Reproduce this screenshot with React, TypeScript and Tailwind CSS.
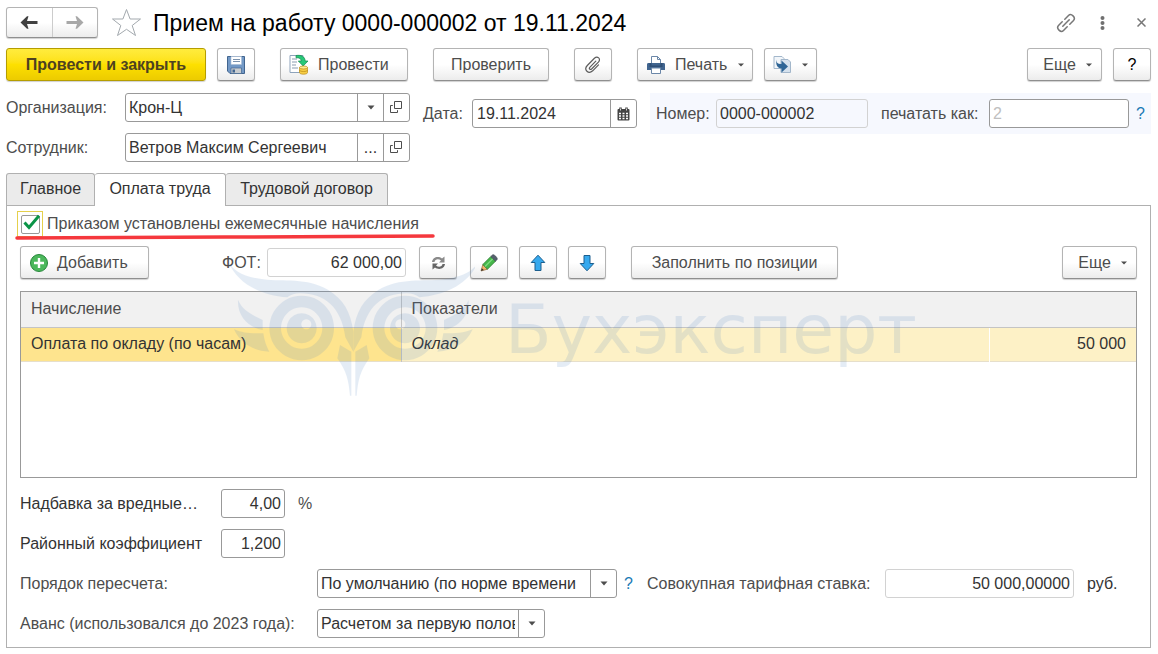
import { ReactNode, useState } from 'react'
import clsx from 'clsx'

const btn =
  'flex h-[33px] shrink-0 items-center rounded-[3px] border border-[#b4b4b4] border-b-[#8f8f8f] bg-linear-to-b from-white from-50% to-[#ececec] text-[#4d4d4d] shadow-[0_1px_1px_#d0d0d0]'
const field =
  'h-[29px] rounded-[3px] border border-[#999999] bg-white px-[3px] text-[#333333] outline-none'
const readonlyField =
  'h-[29px] rounded-[3px] border border-[#d2d2d2] px-[3px] text-[#333333] outline-none'

function Button({
  className,
  label,
  start,
  children,
}: {
  className?: string
  label?: string
  start?: boolean
  children: ReactNode
}) {
  return (
    <button
      type="button"
      aria-label={label}
      className={clsx(btn, start ? 'justify-start px-2' : 'justify-center', className)}
    >
      {children}
    </button>
  )
}

function Caret() {
  return (
    <svg width="8" height="5" viewBox="0 0 8 5" aria-hidden="true">
      <path d="M0.5 0.5h7L4 4.5z" fill="#4d4d4d" />
    </svg>
  )
}

function SmallCaret() {
  return (
    <svg width="6" height="4" viewBox="0 0 6 4" aria-hidden="true">
      <path d="M0 0.5h6L3 3.5z" fill="#4d4d4d" />
    </svg>
  )
}

function OpenIcon() {
  return (
    <svg width="13" height="13" viewBox="0 0 13 13" fill="none" stroke="#4d4d4d" aria-hidden="true">
      <path d="M4.5 0.5h7v7h-7z" />
      <path d="M2.8 4.5H0.5v7h7V9.2" />
    </svg>
  )
}

function FieldButton({ label, children }: { label: string; children: ReactNode }) {
  return (
    <button
      type="button"
      aria-label={label}
      className="flex w-[26px] shrink-0 items-center justify-center border-l border-[#999999] text-[#333333]"
    >
      {children}
    </button>
  )
}

function Combo({ id, value, className, open }: { id: string; value: string; className: string; open?: boolean }) {
  return (
    <div className={clsx('flex h-[29px] overflow-hidden rounded-[3px] border border-[#999999]', className)}>
      <select id={id} className="min-w-0 flex-1 appearance-none pl-[3px] pr-[3px] text-[#333333] outline-none">
        <option>{value}</option>
      </select>
      <FieldButton label="Выбрать">
        <Caret />
      </FieldButton>
      {open && (
        <FieldButton label="Открыть">
          <OpenIcon />
        </FieldButton>
      )}
    </div>
  )
}

function Arrow({ color, flip }: { color: string; flip?: boolean }) {
  return (
    <svg width="18" height="13" viewBox="0 0 18 13" className={flip ? 'rotate-180' : ''} aria-hidden="true">
      <path d="M0.5 6.5L7 0.2h1.500L7 5h10.500v3H7l1.500 4.800H7z" fill={color} />
    </svg>
  )
}

function SaveIcon() {
  return (
    <svg width="20" height="20" viewBox="0 0 20 20" aria-hidden="true">
      <path d="M1.5 1.5h17v17H4L1.5 16z" fill="#7399c6" stroke="#42658f" />
      <path d="M5 1.5h10.500v8H5z" fill="#fff" stroke="#a9bdd5" strokeWidth="0.6" />
      <path d="M7 4.500h7M7 6.500h7" stroke="#7b92ad" />
      <path d="M5 13h10.500v5.500H5z" fill="#c9cdd0" stroke="#42658f" strokeWidth="0.7" />
      <path d="M6.500 14.500h2.500v3H6.500z" fill="#42658f" />
    </svg>
  )
}

function PostIcon() {
  return (
    <svg width="20" height="21" viewBox="0 0 20 21" aria-hidden="true">
      <path d="M1 1.500h13v17H1z" fill="#fff" stroke="#8ea3bb" />
      <path d="M3 5h5M3 8h5M3 11h4M3 14h6M10 4h2" stroke="#8a9bb0" />
      <path d="M7 1.500c5-.8 9 1 9.200 5.500H19l-4.800 5-4.900-5h3C12 4.500 10 3.500 7 3.800z" fill="#28c878" stroke="#12894c" strokeWidth="0.7" />
      <path d="M10.500 13.500v5c0 2.300 8 2.300 8 0v-5z" fill="#f7ce46" stroke="#b98a14" strokeWidth="0.7" />
      <ellipse cx="14.500" cy="13.500" rx="4" ry="1.500" fill="#ffe98d" stroke="#b98a14" strokeWidth="0.7" />
      <path d="M10.500 16c0 2 8 2 8 0" fill="none" stroke="#b98a14" strokeWidth="0.7" />
    </svg>
  )
}

function ClipIcon() {
  return (
    <svg width="18" height="18" viewBox="0 0 18 18" fill="none" stroke="#5c5c5c" strokeWidth="1.200" strokeLinecap="round" aria-hidden="true">
      <path d="M11.800 5.200L5.800 11.300c-1.200 1.400.4 2.900 1.800 1.700l6.800-6.900c3-3.300-1-6.600-4-3.800L3.300 9.500c-4 4.300 1.200 9.200 5.400 5.300l5.800-5.900" />
    </svg>
  )
}

function PrintIcon() {
  return (
    <svg width="20" height="20" viewBox="0 0 20 20" aria-hidden="true">
      <path d="M5.500 9V1.500h6l3 3V9z" fill="#fff" stroke="#6b87a8" />
      <path d="M11.500 1.500v3h3" fill="none" stroke="#6b87a8" />
      <path d="M1 9.500c0-1 .5-1.500 1.500-1.500h15c1 0 1.500.5 1.500 1.500V15H1z" fill="#41658f" />
      <path d="M3.500 8h2v2.500h9V8h2v4h-13z" fill="#2f4f76" />
      <path d="M5.500 13h9v5.500h-9z" fill="#fff" stroke="#6b87a8" />
    </svg>
  )
}

function CopyIcon() {
  return (
    <svg width="19" height="19" viewBox="0 0 19 19" aria-hidden="true">
      <path d="M1 1.500h8l2 2v10H1z" fill="#f2f6fa" stroke="#a3b7cb" />
      <path d="M8 4.500h7l2.500 2.500v10.500H8z" fill="#d5e1ed" stroke="#a3b7cb" />
      <path d="M3.500 4.500c0 3.500 1 4.500 5 4.500V5.500l6.500 6-6.500 6v-4C4.500 13.500 2.500 10 3.500 4.500z" fill="#2e6596" />
    </svg>
  )
}

function CalendarIcon() {
  return (
    <svg width="13" height="14" viewBox="0 0 13 14" aria-hidden="true">
      <path d="M1.500 2h10a1 1 0 0 1 1 1v9.500a1 1 0 0 1-1 1h-10a1 1 0 0 1-1-1V3a1 1 0 0 1 1-1z" fill="#444" />
      <path d="M3.500 0.500v3M9.500 0.500v3" stroke="#444" strokeWidth="2.500" />
      <path d="M3.500 1.500v2M9.500 1.500v2" stroke="#fff" strokeWidth="0.800" />
      <path d="M2 6.500h2M5.500 6.500h2M9 6.500h2M2 9h2M5.500 9h2M9 9h2M2 11.500h2M5.500 11.500h2M9 11.500h2" stroke="#fff" strokeWidth="1.500" />
    </svg>
  )
}

function RefreshIcon() {
  return (
    <svg width="15" height="14" viewBox="0 0 15 14" aria-hidden="true">
      <path d="M1 6C1.500 1.500 7-.5 11 2.500L13.500.5v6H8l2-2C7.500 2.500 4 3 3.500 6z" fill="#8a8a8a" />
      <path d="M14 8c-.5 4.500-6 6.500-10 3.500L1.500 13.500v-6H7l-2 2c2.500 2 6 1.500 6.500-1.500z" fill="#666" />
    </svg>
  )
}

function PencilIcon() {
  return (
    <svg width="18" height="18" viewBox="0 0 18 18" aria-hidden="true">
      <path d="M1 17l1.800-6.500 4.700 4.700z" fill="#f6b26b" stroke="#7d5527" strokeWidth="0.6" />
      <path d="M1 17l.9-2.800 1.900 1.900z" fill="#333" />
      <path d="M2.800 10.500l8-8 4.700 4.700-8 8z" fill="#45b649" stroke="#27722b" strokeWidth="0.700" />
      <path d="M5 12.500l8-8" stroke="#7ddc7f" strokeWidth="1.200" />
      <path d="M10.800 2.500L12.500.9c1.300-1.200 5.800 3.300 4.600 4.600l-1.600 1.700z" fill="#56616e" stroke="#3b444e" strokeWidth="0.600" />
    </svg>
  )
}

function MoveIcon({ down }: { down?: boolean }) {
  return (
    <svg width="16" height="18" viewBox="0 0 16 18" className={down ? 'rotate-180' : ''} aria-hidden="true">
      <path d="M8 1.200L14.800 8.500H11v8H5v-8H1.200z" fill="#36a9ee" stroke="#1c5f8f" strokeLinejoin="round" />
    </svg>
  )
}

function AddIcon() {
  return (
    <svg width="20" height="20" viewBox="0 0 20 20" aria-hidden="true">
      <circle cx="10" cy="10" r="8.500" fill="#4cb85c" stroke="#27873a" />
      <path d="M10 5v10M5 10h10" stroke="#fff" strokeWidth="2.400" />
    </svg>
  )
}

function OwlHalf() {
  return (
    <>
      <path d="M85 35C100 62 128 80 190 88C250 96 320 82 385 120C430 148 452 185 460 245V305L436 262C424 170 372 130 300 130C286 130 272 134 262 142C180 135 112 100 85 35z" />
      <path
        fillRule="evenodd"
        d="M305 137a97 97 0 1 0 .1 0zM305 172a62 62 0 1 1-.1 0z"
      />
      <path fillRule="evenodd" d="M305 190a45 45 0 1 0 .1 0zM319 208a15 15 0 1 1-.1 0z" />
      <path d="M114 150C128 180 150 192 188 210V240C146 232 112 200 114 150z" />
      <path d="M102 238C130 250 150 250 190 250C194 275 200 290 208 305C160 302 122 282 102 238z" />
      <path d="M420 285L454 305V437H450C446 390 440 365 412 325z" />
    </>
  )
}

function Watermark() {
  return (
    <div
      aria-hidden="true"
      className="pointer-events-none absolute -top-[31px] left-[207px] flex text-[#4a80c0] opacity-[0.14]"
    >
      <svg width="248" height="137" viewBox="81 30 744 411" fill="currentColor">
        <OwlHalf />
        <g transform="translate(920 0) scale(-1 1)">
          <OwlHalf />
        </g>
      </svg>
      <span className="ml-[30px] mt-[22px] font-['DejaVu_Sans',sans-serif] text-[68px] leading-[96px]">
        Бухэксперт
      </span>
    </div>
  )
}

function Header() {
  return (
    <header className="flex h-[31px] items-center">
      <div className="flex h-[31px] w-[92px] rounded-[3px] border border-[#b4b4b4] border-b-[#8f8f8f] bg-linear-to-b from-white from-50% to-[#ececec] shadow-[0_1px_1px_#d0d0d0]">
        <button type="button" aria-label="Назад" className="flex flex-1 items-center justify-center border-r border-[#cccccc]">
          <Arrow color="#404040" />
        </button>
        <button type="button" aria-label="Вперед" className="flex flex-1 items-center justify-center">
          <Arrow color="#a8a8a8" flip />
        </button>
      </div>
      <button type="button" aria-label="В избранное" className="ml-[13px]">
        <svg width="31" height="29" viewBox="0 0 31 29" fill="#fff" stroke="#a3a9ae" aria-hidden="true">
          <path d="M15.500 1.500l3.600 9.500h10.400l-8.300 6.500 3.300 10-9-6.200-9 6.200 3.300-10L1.500 11h10.400z" />
        </svg>
      </button>
      <h1 className="ml-[11px] text-[23px] text-black">Прием на работу 0000-000002 от 19.11.2024</h1>
      <div className="ml-auto flex items-center pr-[5px]">
        <button type="button" aria-label="Ссылка">
          <svg width="20" height="20" viewBox="0 0 20 20" fill="none" stroke="#777" strokeWidth="1.500" strokeLinecap="round" aria-hidden="true">
            <path d="M6.800 13.200l6.400-6.400" />
            <path d="M8.800 6.200l3.700-3.700c2.700-2.700 7.700 2 5 5l-3.700 3.700" />
            <path d="M11.200 13.800l-3.700 3.700c-2.700 2.700-7.700-2-5-5l3.700-3.700" />
          </svg>
        </button>
        <button type="button" aria-label="Меню" className="ml-6">
          <svg width="5" height="16" viewBox="0 0 5 16" fill="#707070" aria-hidden="true">
            <circle cx="2.500" cy="3" r="2" />
            <circle cx="2.500" cy="8" r="2" />
            <circle cx="2.500" cy="13" r="2" />
          </svg>
        </button>
        <button type="button" aria-label="Закрыть" className="ml-8">
          <svg width="9" height="9" viewBox="0 0 9 9" stroke="#777" strokeWidth="1.500" aria-hidden="true">
            <path d="M0.500 0.500l8 8M8.500 0.500l-8 8" />
          </svg>
        </button>
      </div>
    </header>
  )
}

function Toolbar() {
  return (
    <div className="mt-[10px] flex">
      <button
        type="button"
        className="h-[33px] w-[200px] rounded-[3px] border border-[#b59d00] bg-linear-to-b from-[#ffec3d] via-[#fde000] to-[#eccb00] font-bold text-[#4d4220] shadow-[0_1px_1px_#d0d0d0]"
      >
        Провести и закрыть
      </button>
      <Button label="Записать" className="ml-[11px] w-[38px]">
        <SaveIcon />
      </Button>
      <Button start className="ml-[25px] w-[128px] gap-[9px]">
        <PostIcon />
        Провести
      </Button>
      <Button className="ml-[25px] w-[116px]">Проверить</Button>
      <Button label="Файлы" className="ml-[25px] w-[38px]">
        <ClipIcon />
      </Button>
      <Button start className="ml-[25px] w-[116px] gap-[9px]">
        <PrintIcon />
        <span className="flex-1 text-left">Печать</span>
        <SmallCaret />
      </Button>
      <Button label="Создать на основании" className="ml-[11px] w-[53px] gap-[10px]">
        <CopyIcon />
        <SmallCaret />
      </Button>
      <Button className="ml-auto w-[75px] gap-[10px] pl-[6px]">
        Еще
        <SmallCaret />
      </Button>
      <Button label="Справка" className="ml-[11px] w-[38px] text-black">
        ?
      </Button>
    </div>
  )
}

function DocumentFields() {
  return (
    <div className="mt-3 flex items-start">
      <div className="grid shrink-0 grid-cols-[119px_285px] items-center gap-y-[11px]">
        <label htmlFor="org">Организация:</label>
        <Combo id="org" value="Крон-Ц" className="w-full" open />
        <label htmlFor="employee">Сотрудник:</label>
        <div className="flex h-[29px] overflow-hidden rounded-[3px] border border-[#999999]">
          <input id="employee" defaultValue="Ветров Максим Сергеевич" className="min-w-0 flex-1 px-[3px] text-[#333333] outline-none" />
          <FieldButton label="Выбрать">...</FieldButton>
          <FieldButton label="Открыть">
            <OpenIcon />
          </FieldButton>
        </div>
      </div>
      <div className="ml-[13px] flex h-[41px] shrink-0 items-center">
        <label htmlFor="date" className="w-[49px]">
          Дата:
        </label>
        <div className="flex h-[29px] w-[165px] overflow-hidden rounded-[3px] border border-[#999999]">
          <input id="date" defaultValue="19.11.2024" className="min-w-0 flex-1 px-[4px] text-[#333333] outline-none" />
          <FieldButton label="Календарь">
            <CalendarIcon />
          </FieldButton>
        </div>
      </div>
      <div className="ml-[13px] flex h-[41px] min-w-0 flex-1 items-center bg-[#f6f8fe] px-[6px]">
        <label htmlFor="number" className="w-[60px] shrink-0">
          Номер:
        </label>
        <input id="number" readOnly value="0000-000002" className={clsx(readonlyField, 'w-[152px] shrink-0')} />
        <label htmlFor="printAs" className="ml-[13px] w-[108px] shrink-0">
          печатать как:
        </label>
        <input id="printAs" placeholder="2" className={clsx(field, 'min-w-0 flex-1 placeholder:text-[#c0c0c0]')} />
        <a href="#number-help" className="ml-[7px] text-[#1a7ab5]">
          ?
        </a>
      </div>
    </div>
  )
}

const tabs = [
  { name: 'Главное', width: 'w-[89px]' },
  { name: 'Оплата труда', width: 'w-[131px]' },
  { name: 'Трудовой договор', width: 'w-[162px]' },
]

function Accruals() {
  return (
    <div className="relative mt-3">
      <div className="h-[187px] border border-[#999999] bg-white">
        <table className="w-full table-fixed border-collapse">
          <colgroup>
            <col className="w-[380px]" />
            <col />
            <col className="w-[146px]" />
          </colgroup>
          <thead>
            <tr className="h-[35px] bg-[#f1f1f1] text-left text-[#4d4d4d]">
              <th className="border-b border-r border-[#c4c4c4] px-[10px] font-normal">Начисление</th>
              <th colSpan={2} className="border-b border-[#c4c4c4] px-[10px] font-normal">
                Показатели
              </th>
            </tr>
          </thead>
          <tbody>
            <tr className="h-[34px] border-b border-[#e6dfcb] text-[#333333]">
              <td className="border-r border-[#c4c4c4] bg-[#fee48e] px-[10px]">Оплата по окладу (по часам)</td>
              <td className="border-r border-white bg-[#fdf1c6] px-[10px] italic">Оклад</td>
              <td className="bg-[#fdf1c6] px-[10px] text-right">50 000</td>
            </tr>
          </tbody>
        </table>
      </div>
      <Watermark />
    </div>
  )
}

export default function App() {
  const [tab, setTab] = useState('Оплата труда')
  const [checked, setChecked] = useState(true)

  return (
    <main className="bg-white pb-[6px] pl-[6px] pr-[7px] pt-[7px] font-['Liberation_Sans',Arial,sans-serif] text-base leading-5 text-[#4d4d4d]">
      <Header />
      <Toolbar />
      <DocumentFields />

      <div role="tablist" className="mt-[11px] flex">
        {tabs.map((t, i) => (
          <button
            key={t.name}
            type="button"
            role="tab"
            aria-selected={tab === t.name}
            onClick={() => setTab(t.name)}
            className={clsx(
              'rounded-t-[3px] border border-b-0 border-[#b0b0b0] text-[#333333]',
              t.width,
              i > 0 && 'border-l-0',
              tab === t.name ? 'relative z-10 -mb-px h-[33px] bg-white pb-[3px]' : 'h-8 bg-[#ebebeb] pb-[2px]',
            )}
          >
            {t.name}
          </button>
        ))}
      </div>

      <section className="border border-[#b0b0b0] px-[13px] pb-[9px] pt-[5px]">
        <div className="relative -ml-[3px] flex h-[26px] items-center">
          <span className="relative flex size-[26px] items-center justify-center border border-[#e5d04c]">
            <input
              id="monthly"
              type="checkbox"
              checked={checked}
              onChange={(e) => setChecked(e.target.checked)}
              className="size-[19px] appearance-none rounded-[2px] border border-[#999999] bg-white"
            />
            {checked && (
              <svg width="18" height="17" viewBox="0 0 18 17" className="pointer-events-none absolute left-[5px] top-[2px]" aria-hidden="true">
                <path d="M1.500 8.500l4.500 5L16 1.800" fill="none" stroke="#0b9447" strokeWidth="3" />
              </svg>
            )}
          </span>
          <label htmlFor="monthly" className="ml-1">
            Приказом установлены ежемесячные начисления
          </label>
          <svg width="421" height="6" viewBox="0 0 421 6" className="absolute -left-[2px] top-[23px]" aria-hidden="true">
            <path d="M2 4C140 4.200 280 2 418 2" fill="none" stroke="#f5383d" strokeWidth="3.500" strokeLinecap="round" />
          </svg>
        </div>

        <div className="mt-[9px] flex items-center">
          <Button start className="w-[129px] gap-[8px]">
            <AddIcon />
            Добавить
          </Button>
          <label htmlFor="fot" className="ml-[73px] w-[45px]">
            ФОТ:
          </label>
          <input id="fot" readOnly value="62 000,00" className={clsx(readonlyField, 'w-[139px] text-right')} />
          <Button label="Обновить" className="ml-[13px] w-[38px]">
            <RefreshIcon />
          </Button>
          <Button label="Изменить" className="ml-[13px] w-[38px]">
            <PencilIcon />
          </Button>
          <Button label="Вверх" className="ml-[11px] w-[38px]">
            <MoveIcon />
          </Button>
          <Button label="Вниз" className="ml-[11px] w-[38px]">
            <MoveIcon down />
          </Button>
          <Button className="ml-[25px] w-[207px]">Заполнить по позиции</Button>
          <Button className="ml-auto w-[75px] gap-[10px] pl-[6px]">
            Еще
            <SmallCaret />
          </Button>
        </div>

        <Accruals />

        <div className="mt-[11px] flex flex-col gap-[11px]">
          <div className="flex items-center">
            <label htmlFor="harm" className="w-[201px] text-[#333333]">
              Надбавка за вредные…
            </label>
            <input id="harm" defaultValue="4,00" className={clsx(field, 'w-[64px] text-right')} />
            <span className="ml-[13px]">%</span>
          </div>
          <div className="flex items-center">
            <label htmlFor="district" className="w-[201px] text-[#333333]">
              Районный коэффициент
            </label>
            <input id="district" defaultValue="1,200" className={clsx(field, 'w-[64px] text-right')} />
          </div>
          <div className="flex items-center">
            <label htmlFor="recalc" className="w-[297px]">
              Порядок пересчета:
            </label>
            <Combo id="recalc" value="По умолчанию (по норме времени" className="w-[300px]" />
            <a href="#recalc-help" className="ml-[7px] w-[23px] text-[#1a7ab5]">
              ?
            </a>
            <label htmlFor="rate" className="w-[238px]">
              Совокупная тарифная ставка:
            </label>
            <input id="rate" readOnly value="50 000,00000" className={clsx(readonlyField, 'w-[189px] text-right')} />
            <span className="ml-[13px] text-[#333333]">руб.</span>
          </div>
          <div className="flex items-center">
            <label htmlFor="advance" className="w-[297px]">
              Аванс (использовался до 2023 года):
            </label>
            <Combo id="advance" value="Расчетом за первую половину месяца" className="w-[228px]" />
          </div>
        </div>
      </section>
    </main>
  )
}
